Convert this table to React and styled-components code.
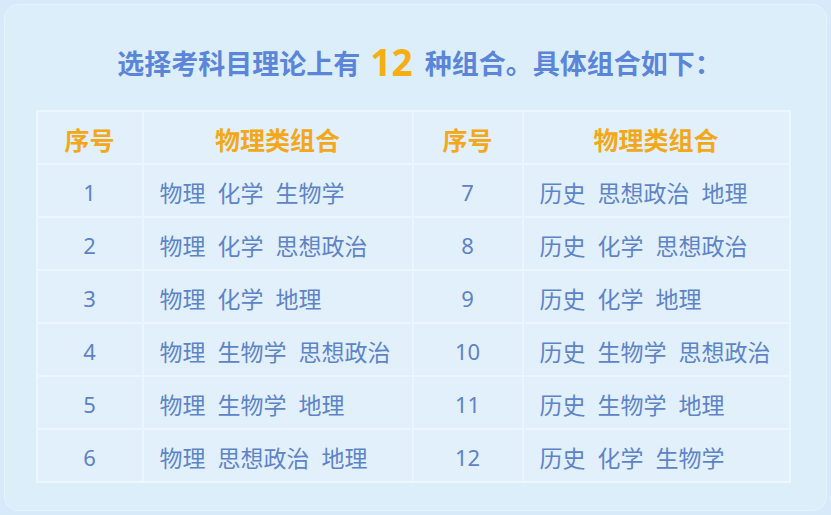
import React from 'react';
import styled, { createGlobalStyle } from 'styled-components';

const left = [
  ['1', ['物理', '化学', '生物学']],
  ['2', ['物理', '化学', '思想政治']],
  ['3', ['物理', '化学', '地理']],
  ['4', ['物理', '生物学', '思想政治']],
  ['5', ['物理', '生物学', '地理']],
  ['6', ['物理', '思想政治', '地理']],
];
const right = [
  ['7', ['历史', '思想政治', '地理']],
  ['8', ['历史', '化学', '思想政治']],
  ['9', ['历史', '化学', '地理']],
  ['10', ['历史', '生物学', '思想政治']],
  ['11', ['历史', '生物学', '地理']],
  ['12', ['历史', '化学', '生物学']],
];

const Global = createGlobalStyle`
  html, body { margin: 0; padding: 0; }
  body {
    background: #d7eaf9;
    font-family: "Noto Sans CJK SC", "Noto Sans", sans-serif;
  }
`;

const Page = styled.div`
  width: 831px;
  height: 515px;
  padding: 4px;
  box-sizing: border-box;
`;

const Card = styled.div`
  height: 100%;
  box-sizing: border-box;
  background: #ddeefb;
  border: 1px solid #e6f3fd;
  border-radius: 14px;
  padding-top: 37px;
  display: flex;
  flex-direction: column;
  align-items: center;
`;

const Title = styled.h1`
  margin: 0;
  height: 40px;
  line-height: 40px;
  font-size: 27px;
  font-weight: 700;
  color: #5a85d8;
  white-space: nowrap;
  padding-left: 8px;
`;

const Big = styled.span`
  font-size: 37px;
  color: #f6ae12;
  margin: 0 12px 0 10px;
  font-family: "Noto Sans", "Noto Sans CJK SC", sans-serif;
  vertical-align: -2px;
`;

const Table = styled.div`
  margin-top: 28px;
  margin-right: 5px;
  display: grid;
  grid-template-columns: 104px 268px 108px 265px;
  grid-auto-rows: 51px;
  gap: 2px;
  padding: 2px;
  background: #ecf6fe;
`;

const Cell = styled.div`
  background: #e2f0fc;
  display: flex;
  align-items: center;
  justify-content: ${p => (p.$center ? 'center' : 'flex-start')};
  padding-left: ${p => (p.$center ? '0' : '16px')};
  padding-top: 2px;
  box-sizing: border-box;
`;

const Head = styled.span`
  font-size: 25px;
  font-weight: 700;
  color: #f2a81a;
`;

const Num = styled.span`
  font-size: 22px;
  color: #5f82c6;
  font-family: "Noto Sans", sans-serif;
`;

const Words = styled.span`
  display: flex;
  gap: 12px;
  font-size: 23px;
  color: #5e84c8;
`;

const Row = ({ a, b }) => (
  <>
    <Cell $center><Num>{a[0]}</Num></Cell>
    <Cell><Words>{a[1].map(w => <span key={w}>{w}</span>)}</Words></Cell>
    <Cell $center><Num>{b[0]}</Num></Cell>
    <Cell><Words>{b[1].map(w => <span key={w}>{w}</span>)}</Words></Cell>
  </>
);

export default function App() {
  return (
    <Page>
      <Global />
      <Card>
        <Title>
          选择考科目理论上有<Big>12</Big>种组合。具体组合如下：
        </Title>
        <Table>
          <Cell $center><Head>序号</Head></Cell>
          <Cell $center><Head>物理类组合</Head></Cell>
          <Cell $center><Head>序号</Head></Cell>
          <Cell $center><Head>物理类组合</Head></Cell>
          {left.map((r, i) => (
            <Row key={r[0]} a={r} b={right[i]} />
          ))}
        </Table>
      </Card>
    </Page>
  );
}
